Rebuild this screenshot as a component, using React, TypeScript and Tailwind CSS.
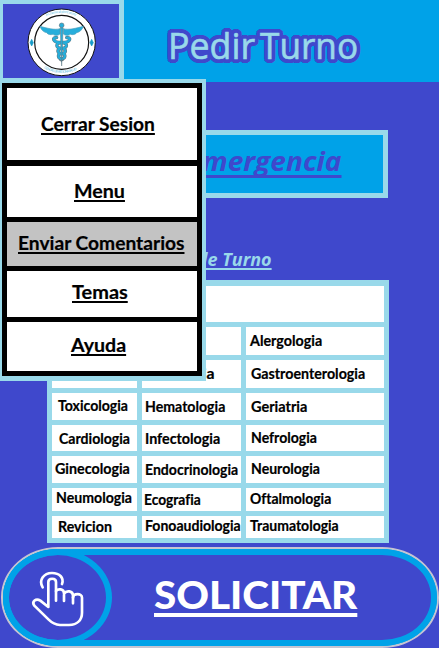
import { useLayoutEffect, useRef, useState } from "react";
import type { ReactNode } from "react";

/** Text squeezed or stretched horizontally so that it fills a given width. */
function FitText({ width, className = "", children }: { width: number; className?: string; children: ReactNode }) {
  const ref = useRef<HTMLSpanElement>(null);
  const [scale, setScale] = useState(1);
  useLayoutEffect(() => {
    if (ref.current) setScale(width / ref.current.offsetWidth);
  }, [width]);
  return (
    <span className="block shrink-0 text-left [font-variant-ligatures:none]" style={{ width }}>
      <span
        ref={ref}
        className={`inline-block origin-left whitespace-nowrap align-top ${className}`}
        style={{ transform: `scaleX(${scale})` }}
      >
        {children}
      </span>
    </span>
  );
}

type Cell = { text: string; width: number; pad: string };
type Row = { height: string; cells: Cell[] };

const rows: Row[] = [
  {
    height: "h-[28px]",
    cells: [
      { text: "", width: 0, pad: "" },
      { text: "", width: 0, pad: "" },
      { text: "Alergologia", width: 72, pad: "pl-[4px] pt-[4px]" },
    ],
  },
  {
    height: "h-[28px]",
    cells: [
      { text: "", width: 0, pad: "" },
      { text: "Pediatria", width: 62, pad: "pl-[10px] pt-[4px]" },
      { text: "Gastroenterologia", width: 114, pad: "pl-[5px] pt-[4px]" },
    ],
  },
  {
    height: "h-[27px]",
    cells: [
      { text: "Toxicologia", width: 70, pad: "pl-[6px] pt-[3px]" },
      { text: "Hematologia", width: 80, pad: "pl-[3px] pt-[4px]" },
      { text: "Geriatria", width: 56, pad: "pl-[5px] pt-[4px]" },
    ],
  },
  {
    height: "h-[26px]",
    cells: [
      { text: "Cardiologia", width: 71, pad: "pl-[7px] pt-[4px]" },
      { text: "Infectologia", width: 75, pad: "pl-[3px] pt-[4px]" },
      { text: "Nefrologia", width: 66, pad: "pl-[5px] pt-[3px]" },
    ],
  },
  {
    height: "h-[27px]",
    cells: [
      { text: "Ginecologia", width: 75, pad: "pl-[3px] pt-[3px]" },
      { text: "Endocrinologia", width: 93, pad: "pl-[3px] pt-[4px]" },
      { text: "Neurologia", width: 69, pad: "pl-[5px] pt-[3px]" },
    ],
  },
  {
    height: "h-[23px]",
    cells: [
      { text: "Neumologia", width: 76, pad: "pl-[4px] pt-0" },
      { text: "Ecografia", width: 57, pad: "pl-[2px] pt-[2px]" },
      { text: "Oftalmologia", width: 81, pad: "pl-[4px] pt-[1px]" },
    ],
  },
  {
    height: "h-[22px]",
    cells: [
      { text: "Revicion", width: 54, pad: "pl-[6px] pt-[1px]" },
      { text: "Fonoaudiologia", width: 96, pad: "pl-[3px] pt-0" },
      { text: "Traumatologia", width: 89, pad: "pl-[4px] pt-0" },
    ],
  },
];

const menuItems = [
  { text: "Cerrar Sesion", width: 114, box: "h-[72px] bg-white pl-[34px] pt-[24px] mb-[6px]" },
  { text: "Menu", width: 51, box: "h-[51px] bg-white pl-[67px] pt-[13px] mb-[5px]" },
  { text: "Enviar Comentarios", width: 167, box: "h-[44px] bg-[#c3c3c3] pl-[11px] pt-[9px] mb-[5px]" },
  { text: "Temas", width: 56, box: "h-[46px] bg-white pl-[65px] pt-[9px] mb-[5px]" },
  { text: "Ayuda", width: 55, box: "h-[49px] bg-white pl-[64px] pt-[11px]" },
];

function Logo() {
  return (
    <svg className="h-[72px] w-[75px]" viewBox="72 18 225 216" fill="none">
      <ellipse cx="185" cy="127" rx="101" ry="100" fill="white" stroke="#111" strokeWidth="3" />
      <ellipse cx="185" cy="127" rx="81" ry="81" stroke="#111" strokeWidth="3.5" />
      <path id="logoTop" d="M139 49 Q185 28 231 49" />
      <path id="logoBottom" d="M132 205 Q185 232 238 205" />
      <g fill="#4db9de" fontFamily="Open Sans, sans-serif" fontSize="10">
        <text textLength="91"><textPath href="#logoTop">A Chemical plant study</textPath></text>
        <text textLength="102"><textPath href="#logoBottom">CIENCIAS DE MEDICINA SALUD</textPath></text>
      </g>
      <path d="M95 118 L100 128 L95 138 L90 128Z M275 118 L280 128 L275 138 L270 128Z" fill="#159bc9" stroke="#159bc9" strokeWidth="2" />
      <path
        d="M180 86 C164 91 140 84 120 79 C124 91 132 97 140 98 C144 104 152 105 159 103 C166 109 175 106 180 102Z M190 86 C206 91 230 84 250 79 C246 91 238 97 230 98 C226 104 218 105 211 103 C204 109 195 106 190 102Z"
        fill="#27aedb"
        stroke="#4a9fbd"
        strokeWidth="2"
      />
      <g strokeLinecap="round">
        <path d="M170 113 C154 111 160 128 179 127 C206 127 204 145 186 145 C168 146 171 161 187 161 C199 162 196 176 185 177" stroke="#60747d" strokeWidth="10" />
        <path d="M200 113 C216 111 210 128 191 127 C164 127 166 145 184 145 C202 146 199 161 183 161 C171 162 174 176 185 177" stroke="#60747d" strokeWidth="10" />
        <path d="M170 113 C154 111 160 128 179 127 C206 127 204 145 186 145 C168 146 171 161 187 161 C199 162 196 176 185 177" stroke="#27aedb" strokeWidth="7" />
        <path d="M200 113 C216 111 210 128 191 127 C164 127 166 145 184 145 C202 146 199 161 183 161 C171 162 174 176 185 177" stroke="#27aedb" strokeWidth="7" />
      </g>
      <path d="M181 83 L189 83 L187 160 L185 198 L183 160Z" fill="#27aedb" stroke="#60747d" strokeWidth="1.5" />
      <path d="M177 179 L184 184 L192 179" stroke="#60747d" strokeWidth="3" />
      <circle cx="185" cy="76" r="7" fill="#27aedb" stroke="#60747d" strokeWidth="2" />
    </svg>
  );
}

function TapIcon() {
  return (
    <svg
      className="h-[60px] w-[56px]"
      viewBox="90 80 168 180"
      fill="none"
      stroke="white"
      strokeWidth="8"
      strokeLinecap="round"
      strokeLinejoin="round"
    >
      <path d="M128 138 C115 117 131 95 156 95 C179 95 193 110 186 128" />
      <path d="M168 178 V122 C168 109 145 109 145 122 V197 L121 178 C108 169 94 181 103 193 L146 235 C158 247 165 250 180 251 H207 C231 250 246 237 246 214 V169 C246 155 220 155 219 169" />
      <path d="M168 149 C174 141 192 142 192 156 V179 M192 157 C199 146 219 148 219 163 V186" />
    </svg>
  );
}

export default function App() {
  return (
    <div className="relative flex h-[648px] w-[439px] flex-col overflow-hidden bg-[#3f48cc] font-['Open_Sans','Noto_Sans',sans-serif] text-black">
      <header className="flex h-[82px] shrink-0">
        <div className="flex w-[124px] justify-center border-b-[4px] border-l-[3px] border-r-[5px] border-t-[4px] border-[#99d9ea] bg-[#3f48cc] pt-[2px]">
          <Logo />
        </div>
        <h1 className="flex flex-1 gap-[5px] bg-[#00a2e8] pl-[44px] pt-[19px] text-[37px] font-medium leading-[51px] text-[#99d9ea] [-webkit-text-stroke:0.6px_#99d9ea] [text-shadow:4.2px_0_#3f48cc,3.9px_1.6px_#3f48cc,3px_3px_#3f48cc,1.6px_3.9px_#3f48cc,0_4.2px_#3f48cc,-1.6px_3.9px_#3f48cc,-3px_3px_#3f48cc,-3.9px_1.6px_#3f48cc,-4.2px_0_#3f48cc,-3.9px_-1.6px_#3f48cc,-3px_-3px_#3f48cc,-1.6px_-3.9px_#3f48cc,0_-4.2px_#3f48cc,1.6px_-3.9px_#3f48cc,3px_-3px_#3f48cc,3.9px_-1.6px_#3f48cc,2px_0_#3f48cc,-2px_0_#3f48cc,0_2px_#3f48cc,0_-2px_#3f48cc]">
          <FitText width={87}>Pedir</FitText>
          <FitText width={98}>Turno</FitText>
        </h1>
      </header>

      <main className="flex flex-col pl-[47px] pt-[48px]">
        <button className="flex h-[68px] w-[341px] justify-end border-[5px] border-[#99d9ea] bg-[#00a2e8] pr-[41px] pt-[7px] text-[27px] font-bold italic leading-[38px] text-[#3f48cc]">
          <FitText width={155} className="underline decoration-[3px] underline-offset-[4px] [text-decoration-skip-ink:none]">
            Emergencia
          </FitText>
        </button>
        <h2 className="mt-[48px] flex h-[34px] w-[225px] justify-end text-[18px] font-bold italic leading-[26px] text-[#99d9ea]">
          <FitText width={116} className="underline decoration-2 underline-offset-[2px] [text-decoration-skip-ink:none]">
            Tipo de Turno
          </FitText>
        </h2>
        <section className="flex h-[263px] w-[342px] flex-col gap-[5px] bg-[#99d9ea] px-[5px] pt-[6px] font-['Lato','Open_Sans',sans-serif] text-[14.5px] font-bold leading-[19px] [-webkit-text-stroke:0.2px_black]">
          <div className="h-[36px] bg-white" />
          {rows.map((row, i) => (
            <div key={i} className={`grid shrink-0 grid-cols-[85px_99px_138px] gap-[5px] ${row.height}`}>
              {row.cells.map((cell, j) => (
                <div key={j} className="bg-white">
                  {cell.text && (
                    <div className={cell.pad}>
                      <FitText width={cell.width}>{cell.text}</FitText>
                    </div>
                  )}
                </div>
              ))}
            </div>
          ))}
        </section>
      </main>

      <footer className="pl-px pt-[4px]">
        <button className="flex h-[101px] w-[438px] rounded-[57px/50px] border-2 border-[#c5c5d2] bg-[#00a2e8]">
          <span className="flex h-[97px] w-full rounded-[55px/48px] border-[6px] border-[#00a2e8] bg-[#3f48cc]">
            <span className="-ml-[6px] -mt-[6px] flex h-[97px] w-[109px] shrink-0 items-center justify-center rounded-[50%] border-[6px] border-[#00a2e8]">
              <TapIcon />
            </span>
            <span className="ml-[42px] mt-[13px] block font-['Lato','Open_Sans',sans-serif] text-[38px] font-black leading-[52px] text-white">
              <FitText width={203} className="underline decoration-[4px] underline-offset-[4px]">
                SOLICITAR
              </FitText>
            </span>
          </span>
        </button>
      </footer>

      <nav className="absolute left-0 top-[79px] h-[302px] w-[206px] bg-[#99d9ea] pl-[2px] pt-[4px]">
        <ul className="h-[293px] w-[200px] bg-black p-[5px]">
          {menuItems.map((item) => (
            <li
              key={item.text}
              className={`font-['Lato','Open_Sans',sans-serif] text-[18.5px] font-bold leading-[24px] [-webkit-text-stroke:0.2px_black] ${item.box}`}
            >
              <FitText
                width={item.width}
                className="underline decoration-2 underline-offset-[2px] [text-decoration-skip-ink:none]"
              >
                {item.text}
              </FitText>
            </li>
          ))}
        </ul>
      </nav>
    </div>
  );
}
